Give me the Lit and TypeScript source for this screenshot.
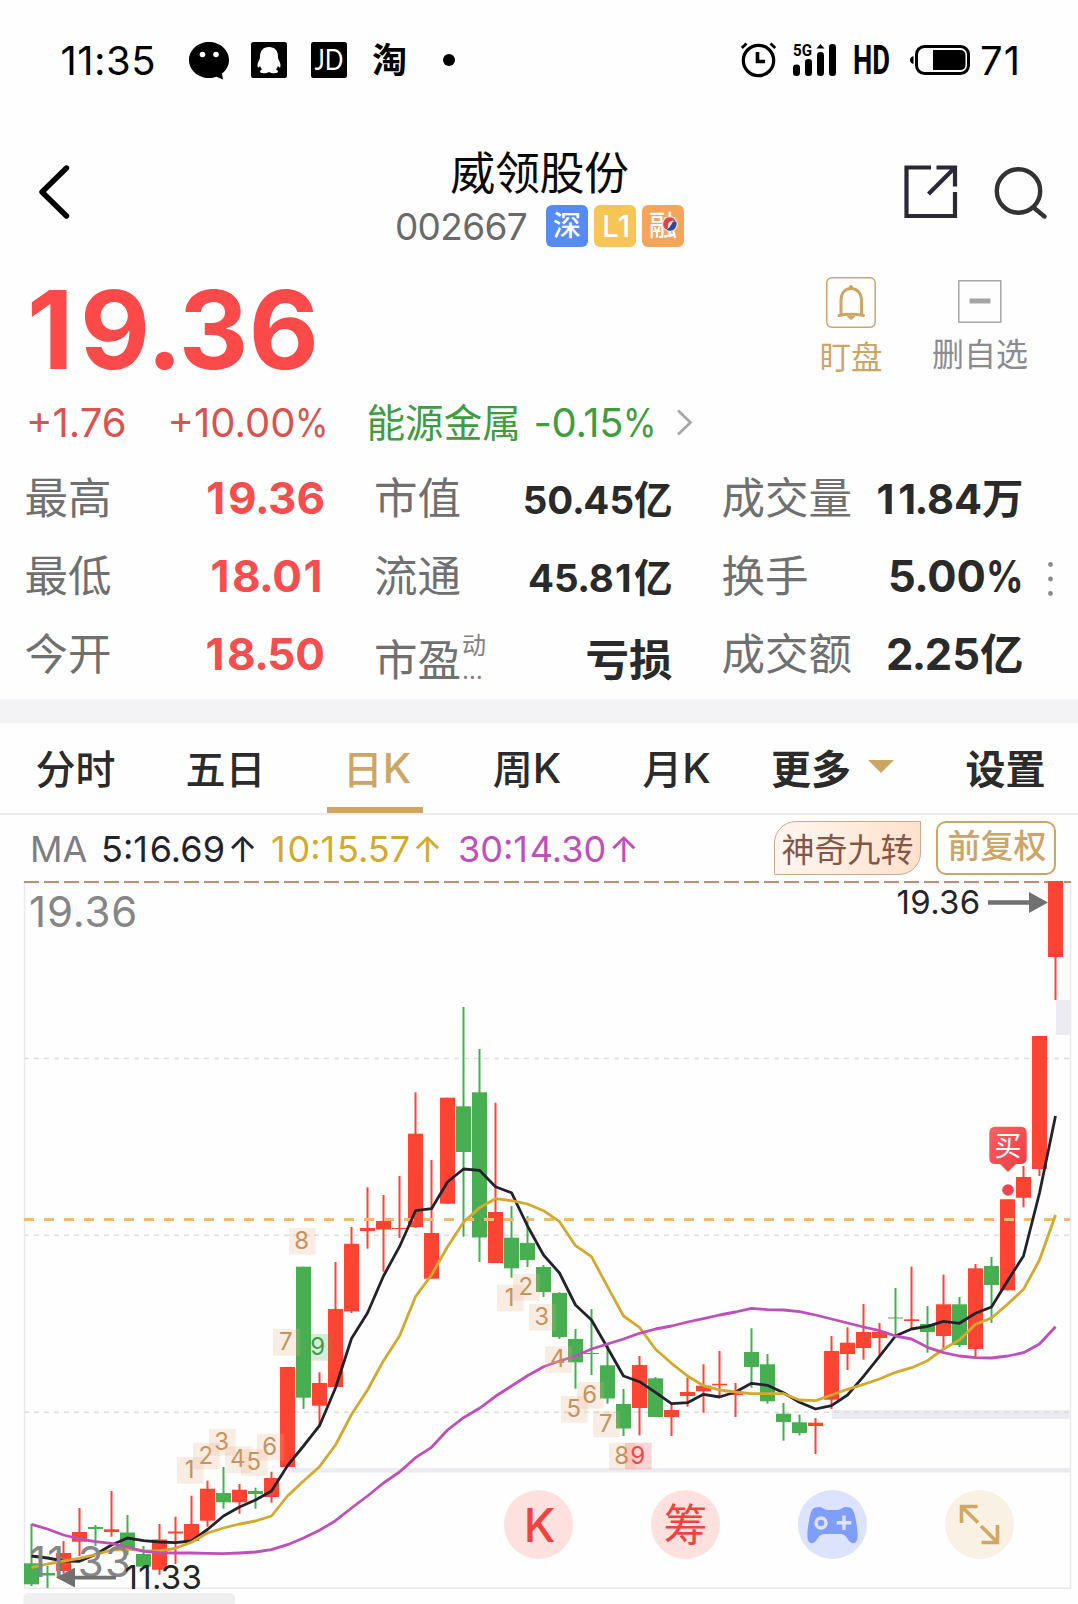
import { LitElement, html, svg, css } from "lit";
import { customElement, state } from "lit/decorators.js";
import { classMap } from "lit/directives/class-map.js";

type Candle = [string, number, number, number, number];

// direction, high, body top, body bottom, low
const CANDLES: Candle[] = [
  ["g", 1524, 1563.3, 1584.3, 1586], ["g", 1566, 1573, 1575.5, 1588], ["r", 1541, 1553, 1571, 1573.5],
  ["r", 1508, 1532, 1541.7, 1556], ["g", 1525, 1527, 1529, 1546], ["r", 1491, 1529.3, 1532, 1536.7],
  ["g", 1515, 1532.5, 1549, 1555], ["g", 1546, 1554, 1566.7, 1567], ["r", 1524, 1539.5, 1569.7, 1574.7],
  ["r", 1516.7, 1531.5, 1533.5, 1564], ["r", 1495.7, 1524, 1541, 1541], ["r", 1480.7, 1488.7, 1520.7, 1526.7],
  ["g", 1467, 1493, 1502.3, 1508.7], ["r", 1484, 1489.7, 1502.3, 1513.7], ["g", 1487.7, 1491, 1494, 1508.7],
  ["r", 1471.7, 1478, 1497, 1502.7], ["r", 1367, 1367, 1467, 1467], ["g", 1266.7, 1266.7, 1397.7, 1409],
  ["r", 1372.3, 1383, 1405.7, 1425], ["r", 1262, 1309, 1387, 1387], ["r", 1227, 1243.8, 1311.3, 1313],
  ["r", 1187.3, 1228, 1231, 1248.7], ["r", 1195, 1221, 1229.5, 1271.7], ["r", 1176, 1228, 1229, 1238],
  ["r", 1092.3, 1133.7, 1227, 1228], ["r", 1160, 1233, 1278.7, 1278.7], ["r", 1097.7, 1097.7, 1203.7, 1203.7],
  ["g", 1007, 1106.3, 1152, 1236.7], ["g", 1049, 1092.3, 1237.5, 1262], ["r", 1102.7, 1212, 1263, 1263],
  ["g", 1206, 1237.7, 1268.3, 1277.7], ["g", 1216.3, 1243, 1260, 1267], ["g", 1265, 1267, 1292, 1297],
  ["g", 1292.3, 1293, 1337, 1339], ["g", 1329, 1339, 1362.3, 1388.7], ["g", 1309, 1353, 1354, 1375],
  ["g", 1345, 1365.3, 1398.5, 1403.7], ["g", 1389, 1404, 1428.5, 1436], ["r", 1356, 1365, 1408, 1435.3],
  ["g", 1377, 1378.3, 1417, 1417], ["r", 1403, 1410, 1417, 1436], ["r", 1377.7, 1392, 1396, 1406.7],
  ["r", 1364.3, 1385.7, 1391.3, 1412.7], ["r", 1351, 1383.8, 1385.3, 1396], ["r", 1383, 1393, 1395, 1417],
  ["g", 1328.3, 1352, 1367, 1387.7], ["g", 1354, 1364.3, 1401.3, 1403.7], ["g", 1403, 1413.7, 1422, 1440.7],
  ["g", 1414.7, 1422.3, 1433, 1435.5], ["r", 1418, 1422.7, 1426, 1454], ["r", 1336, 1351, 1399.7, 1409],
  ["r", 1327.3, 1342.7, 1354, 1370], ["r", 1304, 1332, 1348, 1359.7], ["r", 1323, 1331.7, 1338, 1356.7],
  ["g", 1288, 1317.5, 1318.5, 1336], ["r", 1266.7, 1319.3, 1321, 1328.7], ["g", 1306, 1324, 1332, 1352.7],
  ["r", 1274.7, 1304.3, 1336, 1348], ["g", 1297, 1304.3, 1345, 1347], ["r", 1264, 1268.3, 1349, 1357],
  ["g", 1257, 1266, 1285, 1323], ["r", 1199.3, 1199.3, 1290.3, 1290.3], ["r", 1166, 1177, 1197.7, 1207.3],
  ["r", 1036, 1036, 1169, 1176], ["r", 881, 881, 957, 1000],
];

const MA5 = [1556, 1558, 1561, 1561.3, 1554.5, 1545, 1538, 1540.7, 1542, 1542.7, 1541, 1529.5, 1516, 1507, 1500,
  1491, 1465.7, 1446, 1425.7, 1388, 1338.5, 1313, 1276, 1246.7, 1210.7, 1208.7, 1182, 1169, 1170.3, 1186.7,
  1192.7, 1226, 1255, 1273, 1305, 1320, 1347.7, 1376, 1381.7, 1392.3, 1403.7, 1402.7, 1394.3, 1397, 1392,
  1383.3, 1385.3, 1392.7, 1402.3, 1409, 1405.7, 1395, 1376.3, 1356.3, 1336, 1329, 1326.3, 1321.3, 1323.3,
  1313.3, 1307, 1281, 1256, 1193, 1116];
const MA10 = [1567.7, 1564, 1561, 1558.3, 1554.7, 1550, 1549, 1550.7, 1551, 1548.3, 1542.3, 1533, 1528, 1524,
  1521, 1516, 1496, 1481, 1466.7, 1445, 1414.5, 1390, 1360.7, 1336, 1296.7, 1275, 1246.7, 1222.3, 1207.7,
  1198.7, 1200.7, 1204, 1210.7, 1221.7, 1245.7, 1256.7, 1286.7, 1316, 1327.3, 1349.3, 1363.3, 1376, 1385.7,
  1390, 1392, 1393.7, 1393.7, 1393.7, 1400, 1400.7, 1395, 1389.3, 1384.3, 1379, 1372.3, 1367.7, 1360.7, 1349,
  1340, 1324.3, 1318, 1304.3, 1289.3, 1260, 1215];
const MA30 = [1524.3, 1529, 1535, 1539, 1541.7, 1543.3, 1547, 1551.3, 1552.7, 1553, 1553, 1553.3, 1553.7, 1553,
  1552, 1549.7, 1544.7, 1538, 1530.3, 1520.7, 1508, 1496, 1483, 1472, 1457.7, 1447.3, 1430, 1417.7, 1408.3,
  1396.3, 1386, 1375.7, 1366.7, 1361, 1356, 1349, 1344, 1339, 1333.3, 1329, 1326, 1322, 1318.7, 1315, 1312,
  1308.3, 1309.7, 1310, 1311.7, 1315, 1319, 1323, 1327, 1330.7, 1336, 1339, 1347.3, 1352.7, 1356, 1357.7,
  1358, 1356, 1352.7, 1344, 1326.7];

// digit, left, top, tone
const COUNTS: [string, number, number, string][] = [
  ["1", 177, 1457, ""], ["2", 193, 1442.7, ""], ["3", 209, 1429, ""], ["4", 225, 1446.3, ""],
  ["5", 241, 1449.3, ""], ["6", 257, 1433.7, ""], ["7", 273, 1329, ""], ["8", 289, 1228, ""],
  ["9", 305, 1334, "up"], ["1", 497, 1284.7, ""], ["2", 513, 1274, ""], ["3", 529, 1304, ""],
  ["4", 545, 1346.3, ""], ["5", 561, 1396, ""], ["6", 577, 1382, ""], ["7", 593, 1410.7, ""],
  ["8", 609, 1443, ""], ["9", 625, 1442.7, "down"],
];

const cx = (k: number) => 31.5 + 16 * k;
const line = (v: number[]) => v.map((y, k) => `${cx(k)},${y}`).join(" ");

@customElement("kline-chart")
export class KlineChart extends LitElement {
  static styles = css`
    :host { display: block; height: 723px; }
    svg { display: block; }
    text { font-family: Inter, "Noto Sans CJK SC", sans-serif; }
    .r { fill: #ff4433; }
    .g { fill: #48ae52; }
    .ma { fill: none; stroke-width: 2.8; stroke-linejoin: round; }
    .m5 { stroke: #22232d; }
    .m10 { stroke: #d5a92c; }
    .m30 { stroke: #c04fbb; }
    .band { fill: #ebebf1; }
    .frame { fill: none; stroke: #e9e9ea; stroke-width: 1.5; }
    .grid { stroke: #dedede; stroke-width: 1.6; stroke-dasharray: 5 5; }
    .avg { stroke: #f0ba74; stroke-width: 3; stroke-dasharray: 10 10; }
    .top { stroke: #cb8878; stroke-width: 2; stroke-dasharray: 15 5; }
    .axis { fill: #868686; font-size: 42px; letter-spacing: 0.8px; }
    .wide { letter-spacing: 1.2px; }
    .mark { fill: #262626; font-size: 33px; letter-spacing: 0.3px; }
    .arrow { fill: #707070; }
    .tag { fill: #e9b58b; fill-opacity: 0.24; }
    .tag.up { fill: #48ae52; fill-opacity: 0.22; }
    .tag.down { fill: #ff4440; fill-opacity: 0.22; }
    .digit { fill: #c4935f; font-size: 24px; text-anchor: middle; }
    .digit.up { fill: #3f9c45; }
    .digit.down { fill: #e8484a; }
    .buy { fill: #f4434c; }
    .bubble { fill: url(#buyfill); }
    .buytext { fill: #fff; font-size: 27px; text-anchor: middle; }
    .scroll { fill: #efefef; }
  `;

  render() {
    return html`<svg width="1078" height="723" viewBox="0 881 1078 723">
      <defs>
        <linearGradient id="buyfill" x1="0" y1="0" x2="1" y2="1">
          <stop offset="0" stop-color="#fb6064"></stop>
          <stop offset="1" stop-color="#ee3a42"></stop>
        </linearGradient>
      </defs>
      <path class="frame" d="M24.5 882V1588.3H1070.5V882"></path>
      <rect class="band" x="288" y="1468" width="782" height="4.6"></rect>
      <rect class="band" x="832" y="1410" width="238" height="9"></rect>
      <rect class="band" x="1056" y="1000" width="14" height="35"></rect>
      ${[1058.5, 1235.2, 1412.2].map((y) => svg`<line class="grid" x1="24" x2="1070" y1=${y} y2=${y}></line>`)}
      <line class="top" x1="24" x2="1071" y1="882" y2="882"></line>
      ${CANDLES.map(([c, h, t, b, l], k) => svg`
        <rect class=${c} x=${cx(k) - 1} y=${h} width="2" height=${l - h}></rect>
        <rect class=${c} x=${cx(k) - 7.5} y=${t} width="15" height=${b - t}></rect>`)}
      <line class="avg" x1="24" x2="1070" y1="1219.5" y2="1219.5"></line>
      <polyline class="ma m5" points=${line(MA5)}></polyline>
      <polyline class="ma m10" points=${line(MA10)}></polyline>
      <polyline class="ma m30" points=${line(MA30)}></polyline>
      ${COUNTS.map(([d, x, y, tone]) => svg`
        <rect class="tag ${tone}" x=${x} y=${y} width="26.7" height="26.7"></rect>
        <text class="digit ${tone}" x=${x + 12.7} y=${y + 21}>${d}</text>`)}
      <path class="bubble"
        d="M995.3 1126.7H1020.7Q1026.7 1126.7 1026.7 1132.7V1158Q1026.7 1164 1020.7 1164H1016L1008 1172L1000 1164H995.3Q989.3 1164 989.3 1158V1132.7Q989.3 1126.7 995.3 1126.7Z"></path>
      <text class="buytext" x="1008" y="1156">买</text>
      <circle cx="1008" cy="1190" r="8" fill="#fff"></circle>
      <circle cx="1008" cy="1190" r="5.8" class="buy"></circle>
      <text class="axis" x="29" y="927">19.36</text>
      <text class="axis wide" x="29" y="1576.5">11.33</text>
      <text class="mark" x="896.5" y="914">19.36</text>
      <path class="arrow" d="M988 900.3H1029V892L1048 902.5L1029 913V904.7H988Z"></path>
      <text class="mark" x="124.5" y="1589">11.33</text>
      <path class="arrow" d="M116 1575.8H75V1567.5L56 1577.5L75 1587.5V1579.5H116Z"></path>
      <path class="scroll" d="M23.5 1604V1598Q23.5 1593 28.5 1593H230Q235 1593 235 1598V1604Z"></path>
    </svg>`;
  }
}

// Wraps the characters whose advance differs from the font's own.
const num = (s: string) =>
  s.split("").map((c, i) =>
    c === "1" ? html`<b class="one ${i ? "in" : ""}">1</b>`
    : c === "." ? html`<b class="dot ${s[i - 1] === "1" ? "tight" : ""}">.</b>`
    : c === "%" ? html`<b class="per">%</b>`
    : c === "↑" ? html`<b class="up">↑</b>`
    : c);

@customElement("app-root")
export class AppRoot extends LitElement {
  static styles = css`
    :host {
      display: block; position: relative; width: 1078px; height: 1604px; overflow: hidden;
      background: #fefefe; color: #2b2b2b; font-family: Inter, "Noto Sans CJK SC", sans-serif;
    }
    * { box-sizing: border-box; }
    svg { display: block; flex: none; overflow: visible; }
    b { font-weight: inherit; }
    .one { letter-spacing: 0.06em; }
    .one.in { padding-left: 0.035em; }
    .dot { margin: 0 -0.037em; }
    .dot.tight { margin-left: -0.1em; }
    .per { display: inline-block; transform: scaleX(0.85); transform-origin: left; margin-right: -0.15em; }
    .legend .one { letter-spacing: 0.05em; }
    .legend .one.in { padding-left: 0; }
    .legend .dot { margin: 0; }
    .up { margin-left: 2.5px; }

    .status { display: flex; height: 120px; align-items: center; padding: 0 60px 0 60.500px; color: #000; }
    .clock { width: 128.5px; font-size: 40px; letter-spacing: 0.5px; white-space: nowrap; }
    .tray { display: flex; align-items: center; gap: 24px; }
    .app { width: 36px; height: 36px; }
    .app.qq { margin-left: -2px; }
    .tao { font-size: 35px; font-weight: 700; line-height: 36px; width: 36px; padding-left: 1px; }
    .more { width: 12px; height: 12px; border-radius: 6px; background: #000; margin-left: 12px; }
    .sys { display: flex; align-items: center; margin-left: auto; }
    .signal, .hd { margin-left: 17px; }
    .cell-bat { margin-left: 20px; }
    .pct { font-size: 40px; width: 38px; margin-left: 10px; letter-spacing: 1px; white-space: nowrap; }

    .header { display: grid; grid-template-columns: 1fr auto 1fr; height: 139px; padding: 28px 30px 0 36px; }
    .back { margin-top: 16px; }
    .name { display: flex; flex-direction: column; align-items: center; margin-left: -2.500px; margin-right: 2.500px; }
    .title { font-size: 45px; line-height: 48px; height: 48px; color: #0a0a0a; letter-spacing: -0.4px; padding-top: 2px; }
    .sub { display: flex; align-items: center; margin-top: 9px; height: 42px; }
    .code { font-size: 37px; color: #6a6a6a; line-height: 42px; margin-right: 19px; letter-spacing: -0.65px; padding-top: 2px; }
    .badge {
      display: grid; place-items: center; width: 42px; height: 42px; margin-right: 6px; border-radius: 6px;
      color: #fff; font-size: 28px; line-height: 42px; font-weight: 500; position: relative;
    }
    .badge:last-child { margin-right: 0; }
    .b1 { background: #568bf4; }
    .b2 { background: #f6c556; font-size: 30px; padding-left: 2px; }
    .b3 { background: #f5a55a; }
    .swirl { position: absolute; left: 20px; top: 11px; }
    .tools { display: flex; justify-content: flex-end; gap: 36px; padding-top: 16px; }

    .quote { display: flex; height: 125px; padding-left: 27px; }
    .price { font-size: 108px; line-height: 142px; font-weight: 700; color: #fc4a4a; letter-spacing: 0.2px; }
    .acts { display: flex; margin-left: auto; padding-right: 49px; }
    .act { display: flex; flex-direction: column; align-items: center; white-space: nowrap; }
    .watch { width: 70px; margin-right: 45px; color: #cda564; font-size: 31.5px; padding-top: 18px; }
    .watch span { line-height: 40px; margin-top: 10px; }
    .unpick { width: 98px; color: #8c8c90; font-size: 32px; padding-top: 21px; }
    .unpick span { line-height: 40px; margin-top: 12px; }

    .change { display: flex; align-items: center; height: 75px; padding-left: 26px; font-size: 40px; color: #d9534f; padding-top: 1px; }
    .amt { width: 141.5px; }
    .rate { width: 199px; }
    .sector { display: flex; align-items: center; color: #3f9c3f; white-space: pre; }
    .sector .cn { font-size: 38.6px; width: 167px; padding-bottom: 5px; }
    .neg { letter-spacing: -0.3px; }
    .go { margin-left: 20px; }

    .stats { position: relative; display: grid; grid-template: repeat(3, 78px) / 300.500px 298.500px 302px; column-gap: 49px; padding-left: 24.500px; height: 240px; }
    .cell { display: flex; justify-content: space-between; align-items: center; font-size: 43.5px; line-height: 78px; white-space: nowrap; }
    .cell.low { padding-top: 11px; }
    .label { color: #707070; display: flex; }
    .val { font-weight: 700; color: #2a2a2a; }
    .val.red { color: #f64e4e; font-size: 44px; }
    .val i { font-style: normal; font-weight: 600; }
    .v1 { font-size: 38.5px; padding-top: 3px; }
    .v2 { font-size: 41.500px; padding-top: 1px; }
    .sup { display: flex; flex-direction: column; font-size: 24px; color: #808080; line-height: 24px; padding: 13px 0 0 1px; }
    .sup .el { padding-top: 1px; }
    .dots { position: absolute; left: 1048px; top: 103px; }

    .gap { height: 24px; background: #f3f3f6; }
    .tabs { position: relative; display: grid; grid-template-columns: 151px 149px 154px 146px 153px 185px 1fr; height: 92px; border-bottom: 2px solid #ececec; }
    .tab { display: flex; align-items: center; justify-content: center; height: 90px; font-size: 40px; font-weight: 500; position: relative; padding-bottom: 3px; white-space: nowrap; }
    .tab em { font-style: normal; font-size: 41.5px; padding-top: 2px; }
    .tab.bold { font-weight: 700; gap: 17px; }
    .tab.menu { justify-content: flex-start; padding-left: 18px; }
    .tab.last { padding-right: 5px; }
    .tab.on { color: #cda564; }
    .bar { position: absolute; left: 27px; bottom: 0; width: 96px; height: 6px; background: #cda564; }

    .legend { display: flex; align-items: center; height: 66px; padding-left: 30px; font-size: 36px; white-space: nowrap; }
    .legend > .lg { padding-top: 2px; }
    .lg0 { width: 71px; color: #7d7d84; }
    .lg1 { width: 170px; color: #23232e; }
    .lg2 { width: 187px; color: #d5a92c; }
    .lg3 { color: #c04fbb; }
    .magic, .fq { display: flex; align-items: center; justify-content: center; height: 54px; line-height: 40px; }
    .magic {
      width: 147px; margin-left: auto; margin-right: 15px; border: 1.5px solid #cfa98a; color: #83564a; font-size: 33px; padding-top: 4px;
      border-radius: 22px 0 22px 0; background: linear-gradient(90deg, #fff6f0, #ffe1cb);
    }
    .fq { width: 120px; margin-right: 22px; border: 2px solid #cda564; border-radius: 10px; color: #cda564; font-size: 33px; font-weight: 500; padding: 0 0 4px 2px; }

    .fabs { position: absolute; left: 504px; top: 1490px; display: flex; gap: 78px; }
    .fab { display: flex; align-items: center; justify-content: center; width: 69px; height: 69px; border-radius: 50%; background: #fee0de; color: #ee4440; font-size: 44px; line-height: 60px; }
    .fab.k { font-size: 46px; font-weight: 500; padding: 1px 0 0 2px; }
    .fab.game { background: #dbe3fe; }
    .fab.full { background: #f8f1e4; }
  `;

  @state() private tab = 2;

  private tabs() {
    const items = [
      html`分时`, html`五日`, html`日<em>K</em>`, html`周<em>K</em>`, html`月<em>K</em>`,
      html`更多<svg width="26" height="13" viewBox="0 0 26 13"><path d="M0 0H26L13 13Z" fill="#cda564"></path></svg>`,
      html`设置`,
    ];
    return items.map((t, i) => html`<div
      class=${classMap({ tab: true, on: i === this.tab, bold: i > 4, menu: i === 5, last: i === 6 })}
      @click=${() => { if (i < 5) this.tab = i; }}>${t}${i === this.tab ? html`<div class="bar"></div>` : ""}</div>`);
  }

  render() {
    return html`
      <div class="status">
        <div class="clock">11:35</div>
        <div class="tray">
          <svg width="40" height="38" viewBox="0 0 40 38"><path d="M20 1C9 1 0 9 0 19s9 18 20 18c3 0 5-.5 7.500-1.300L34 38.500 33 32.500C37.500 29 40 24.500 40 19 40 9 31 1 20 1Z"></path><circle cx="13.500" cy="13.500" r="2.800" fill="#fff"></circle><circle cx="27" cy="13.500" r="2.800" fill="#fff"></circle></svg>
          <svg class="app qq" viewBox="0 0 36 36"><rect width="36" height="36" rx="2.500"></rect><path fill="#fff" d="M18 5c-6 0-9 4-9 9.500 0 1.500-.3 2.500-1 4C6.500 21 6 24 7 25.500c.8.300 1.500-.7 2-1.700.4 1.500 1 2.600 2 3.700-2 .8-2.500 2-1.500 3 1.500 1 6.500.8 8.500-.6 2 1.400 7 1.600 8.500.6 1-1 .5-2.200-1.500-3 1-1.100 1.600-2.200 2-3.700.5 1 1.200 2 2 1.700 1-1.500.5-4.500-1-7-.7-1.500-1-2.500-1-4C27 9 24 5 18 5Z"></path></svg>
          <svg class="app" viewBox="0 0 36 36"><rect width="36" height="36" rx="2.500"></rect><text x="3.500" y="28" textLength="29" lengthAdjust="spacingAndGlyphs" font-family="Lato" font-size="28" fill="#fff">JD</text></svg>
          <div class="tao">淘</div>
          <div class="more"></div>
        </div>
        <div class="sys">
          <svg width="35" height="36" viewBox="0 0 35 36" fill="none" stroke="#000" stroke-width="3.200"><circle cx="17.500" cy="18.500" r="15.200"></circle><path d="M16.500 10V19.500H24" stroke-width="3.600"></path><path d="M.8 6 5.500 1.500M34.200 6 29.500 1.500" stroke-width="2.800"></path></svg>
          <svg class="signal" width="44" height="36" viewBox="0 0 44 36"><rect x="0" y="22.500" width="7" height="11.500" rx="3.300"></rect><rect x="12" y="17" width="7" height="17" rx="3.300"></rect><rect x="24" y="10" width="7" height="24" rx="3.300"></rect><rect x="36" y="2" width="7" height="32" rx="3.300"></rect><path d="M23.500 6.500 27.500 2 31.500 6.500Z"></path><text x="0" y="14" textLength="19" lengthAdjust="spacingAndGlyphs" font-family="Roboto" font-weight="700" font-size="16.500">5G</text></svg>
          <svg class="hd" width="36" height="40" viewBox="0 -2 36 40"><text x="-1" y="32" textLength="37" lengthAdjust="spacingAndGlyphs" font-family="Roboto" font-weight="700" font-size="40">HD</text></svg>
          <svg class="cell-bat" width="60" height="36" viewBox="0 0 60 36"><rect x="6.500" y="4.500" width="52" height="27" rx="8" fill="none" stroke="#000" stroke-width="3"></rect><path d="M23 8H50Q55.500 8 55.500 13.500V22.500Q55.500 28 50 28H23Z"></path><path d="M3.500 14V22Q0 21 0 18T3.500 14Z"></path></svg>
          <div class="pct">71</div>
        </div>
      </div>

      <div class="header">
        <svg class="back" width="36" height="56" viewBox="0 0 36 56" fill="none" stroke="#000" stroke-width="5.400" stroke-linecap="round" stroke-linejoin="round"><path d="M30.500 4 6 28 30.500 52"></path></svg>
        <div class="name">
          <div class="title">威领股份</div>
          <div class="sub">
            <span class="code">002667</span>
            <span class="badge b1">深</span><span class="badge b2">L1</span>
            <span class="badge b3">融<svg class="swirl" width="16" height="16" viewBox="0 0 16 16"><circle cx="8" cy="8" r="7.800" fill="#f6e3df"></circle><path d="M8 1.200A6.800 6.800 0 0 0 4 13.500Q6.500 13 6 9.500T10.500 4.500Q13 5 14 6.500A6.800 6.800 0 0 0 8 1.200Z" fill="#e0434f"></path><path d="M8 14.800A6.800 6.800 0 0 0 14.500 6.500Q12 4 10.500 6.500T7 12Q5.500 12.500 4.500 13.700A6.800 6.800 0 0 0 8 14.800Z" fill="#2c4a9a"></path></svg></span>
          </div>
        </div>
        <div class="tools">
          <svg width="54" height="56" viewBox="0 0 54 56" fill="none" stroke="#292a35" stroke-width="4.200"><path d="M27 3.500H2.500V52H51V28"></path><path d="M32.500 3.500H51V22.500M49.500 5 24.500 30"></path></svg>
          <svg width="54" height="56" viewBox="0 0 54 56" fill="none" stroke="#333" stroke-width="4.400"><circle cx="24.500" cy="27" r="21.700"></circle><path d="M39.500 43.500 50.500 52.500" stroke-linecap="round"></path></svg>
        </div>
      </div>

      <div class="quote">
        <div class="price">${num("19.36")}</div>
        <div class="acts">
          <div class="act watch">
            <svg width="50" height="51" viewBox="0 0 50 51" fill="none" stroke="#cda564"><rect x=".8" y=".8" width="48.400" height="49.400" rx="5" stroke-width="1.500"></rect><path d="M15 38V24C15 16 19 11.500 25 11.500S35.500 16 35.500 24V38M13 38.500Q25 36 37.500 38.500" stroke-width="3" stroke-linecap="round" stroke-linejoin="round"></path><path d="M21.500 39.500Q25 45 28.500 39.500Z" fill="#cda564"></path><circle cx="25" cy="10" r="2" fill="#cda564" stroke="none"></circle></svg>
            <span>盯盘</span>
          </div>
          <div class="act unpick">
            <svg width="44" height="43" viewBox="0 0 44 43"><rect x=".8" y=".8" width="42" height="41.400" fill="none" stroke="#a0a0a2" stroke-width="1.400"></rect><path d="M11.500 18.500H32.500V23.500H11.500Z" fill="#a6a6a8"></path></svg>
            <span>删自选</span>
          </div>
        </div>
      </div>

      <div class="change">
        <span class="amt">+1.76</span><span class="rate">+10.00<b class="per">%</b></span>
        <span class="sector"><span class="cn">能源金属</span><span class="neg">-0.15<b class="per">%</b></span></span>
        <svg class="go" width="18" height="28" viewBox="0 0 18 28" fill="none" stroke="#a8a8a8" stroke-width="2.800"><path d="M2 2.500 14.500 14.500 2 26.500"></path></svg>
      </div>

      <div class="stats">
        <div class="cell"><span class="label">最高</span><span class="val red">${num("19.36")}</span></div>
        <div class="cell"><span class="label">市值</span><span class="val v1">${num("50.45")}<i>亿</i></span></div>
        <div class="cell"><span class="label">成交量</span><span class="val v2">${num("11.84")}<i>万</i></span></div>
        <div class="cell"><span class="label">最低</span><span class="val red">${num("18.01")}</span></div>
        <div class="cell"><span class="label">流通</span><span class="val v1">${num("45.81")}<i>亿</i></span></div>
        <div class="cell"><span class="label">换手</span><span class="val">${num("5.00%")}</span></div>
        <div class="cell"><span class="label">今开</span><span class="val red">${num("18.50")}</span></div>
        <div class="cell low"><span class="label">市盈<span class="sup"><span>动</span><span class="el">…</span></span></span><span class="val">亏损</span></div>
        <div class="cell"><span class="label">成交额</span><span class="val">${num("2.25")}<i>亿</i></span></div>
        <svg class="dots" width="6" height="36" viewBox="0 0 6 36" fill="#8a8a8a"><circle cx="2.500" cy="2.500" r="2.400"></circle><circle cx="2.500" cy="17" r="2.400"></circle><circle cx="2.500" cy="31.500" r="2.400"></circle></svg>
      </div>

      <div class="gap"></div>
      <div class="tabs">${this.tabs()}</div>
      <div class="legend">
        <span class="lg lg0">MA</span><span class="lg lg1">${num("5:16.69↑")}</span><span class="lg lg2">${num("10:15.57↑")}</span><span class="lg lg3">${num("30:14.30↑")}</span>
        <span class="magic">神奇九转</span><span class="fq">前复权</span>
      </div>
      <kline-chart></kline-chart>

      <div class="fabs">
        <div class="fab k">K</div>
        <div class="fab chip">筹</div>
        <div class="fab game"><svg width="51" height="38" viewBox="0 0 51 38"><path fill="#7f9dfb" d="M12 1C16 1 17 4 21 4H30C34 4 35 1 39 1C45 1 47 4 48.500 12C50 20 51.500 30 50 34C48.500 38.500 44 38 41.500 34C38.500 29.500 37 28 32 28H19C14 28 12.500 29.500 9.500 34C7 38 2.500 38.500 1 34C-.5 30 1 20 2.500 12C4 4 6 1 12 1Z"></path><circle cx="14" cy="17" r="5" fill="none" stroke="#dbe3fe" stroke-width="3.400"></circle><path d="M37 9.500V24M29.700 16.800H44.300" stroke="#dbe3fe" stroke-width="3.400"></path></svg></div>
        <div class="fab full"><svg width="41" height="41" viewBox="0 0 41 41" fill="none" stroke="#d0a766" stroke-width="3.600"><path d="M18.500 2.500H2.500V19M3 3 19 18.500"></path><path d="M22.500 38.500H38.500V21M38 38 22 22"></path></svg></div>
      </div>
    `;
  }
}
